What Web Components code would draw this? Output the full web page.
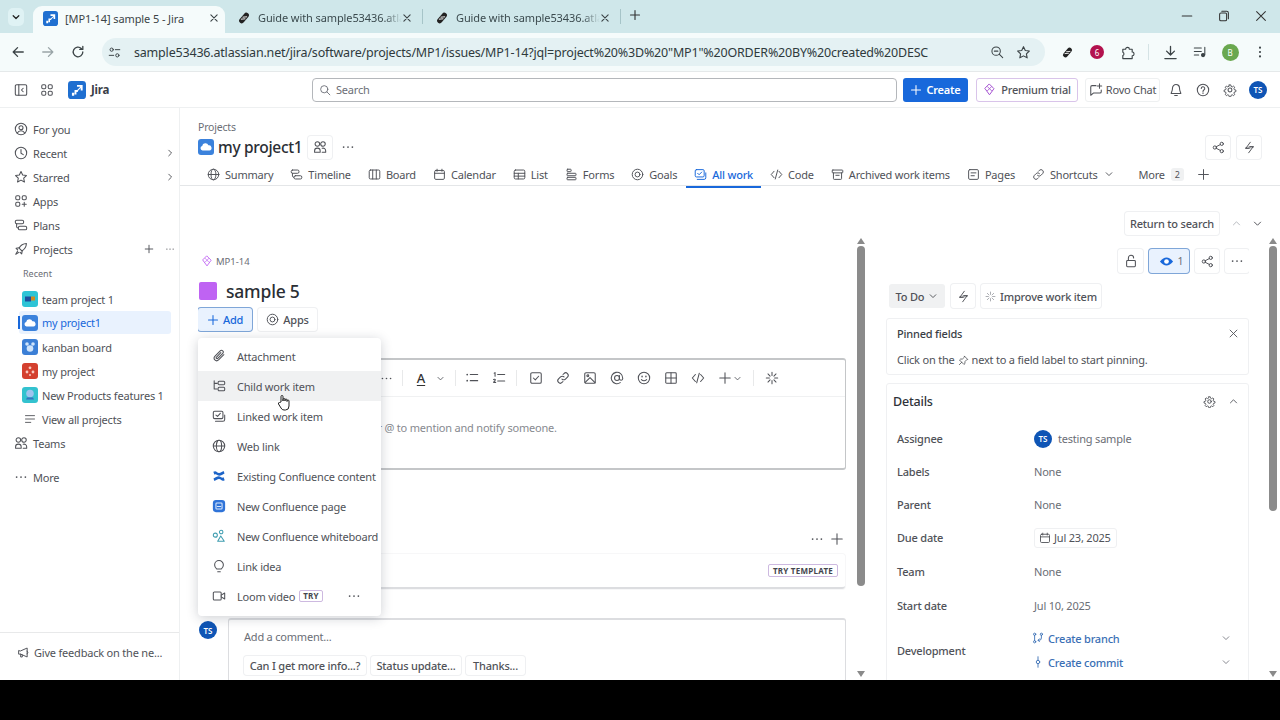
<!DOCTYPE html>
<html lang="en">
<head>
<meta charset="utf-8">
<title>[MP1-14] sample 5 - Jira</title>
<style>
  html, body { margin: 0; height: 100%; background: #000; overflow: hidden; }
  body { font-family: "Noto Sans", "Open Sans", sans-serif; font-size: 11px; color: #505258; letter-spacing: -.2px; }
</style>
</head>
<body>
<app-shell></app-shell>
<script>
const ICONS = {
  foryou: '<circle cx="8" cy="8" r="6.5"/><circle cx="8" cy="6.6" r="2.3"/><path d="M3.8 12.6c1-1.9 2.5-2.6 4.2-2.6s3.2.7 4.2 2.6"/>',
  clock: '<circle cx="8" cy="8" r="6.5"/><path d="M8 4v4.3l2.6 1.6"/>',
  star: '<path d="M8 1.8l1.9 4 4.3.6-3.1 3 .8 4.3L8 11.6l-3.9 2.1.8-4.3-3.1-3 4.3-.6z"/>',
  apps: '<rect x="2" y="2" width="4.6" height="4.6" rx="1.4"/><rect x="9.4" y="2" width="4.6" height="4.6" rx="1.4"/><rect x="2" y="9.4" width="4.6" height="4.6" rx="1.4"/><path d="M11.7 9.4v4.6M9.4 11.7H14"/>',
  grid: '<rect x="2" y="2" width="4.6" height="4.6" rx="1.4"/><rect x="9.4" y="2" width="4.6" height="4.6" rx="1.4"/><rect x="2" y="9.4" width="4.6" height="4.6" rx="1.4"/><rect x="9.4" y="9.4" width="4.6" height="4.6" rx="1.4"/>',
  plans: '<rect x="1.5" y="2.5" width="9.5" height="4" rx="1.6"/><rect x="5" y="9.5" width="9.5" height="4" rx="1.6"/><path d="M3 6.5v3.5q0 1 1.5 1.5"/>',
  rocket: '<path d="M14.2 1.8c-4 .2-6.600 2-8.400 5.200l3.200 3.200c3.200-1.800 5-4.400 5.200-8.400z"/><path d="M6 6.600l-3.600.6 1.800 1.800M9.400 10l-.6 3.600-1.800-1.800"/><path d="M4.200 10.400L2 14l3.600-2.200"/>',
  teams: '<circle cx="5" cy="4.600" r="2.600"/><circle cx="11.400" cy="4.600" r="2.600"/><path d="M1.800 14v-1.500a3 3 0 0 1 6.400 0V14zM10.500 9.500a3 3 0 0 1 4 3V14h-4"/>',
  more: '<circle cx="3" cy="8" r="1" fill="currentColor" stroke="none"/><circle cx="8" cy="8" r="1" fill="currentColor" stroke="none"/><circle cx="13" cy="8" r="1" fill="currentColor" stroke="none"/>',
  right: '<path d="M6 3.500L10.500 8 6 12.500"/>',
  down: '<path d="M3.500 6l4.500 4.500L12.500 6"/>',
  up: '<path d="M3.500 10L8 5.500l4.500 4.500"/>',
  plus: '<path d="M8 2v12M2 8h12"/>',
  viewall: '<path d="M2 3.500h12M2 8h12M2 12.500h7"/>',
  globe: '<circle cx="8" cy="8" r="6.500"/><ellipse cx="8" cy="8" rx="3" ry="6.500"/><path d="M1.500 8h13"/>',
  board: '<rect x="1.500" y="2.500" width="13" height="11" rx="1.500"/><path d="M5.800 2.500v11M10.200 2.500v11"/>',
  calendar: '<rect x="2" y="3" width="12" height="11" rx="1.500"/><path d="M2 6.500h12M5 1.500V4M11 1.500V4"/>',
  list: '<rect x="1.500" y="2.500" width="13" height="11" rx="1.500"/><path d="M1.500 6.500h13M1.500 10h13M6.500 6.500v7"/>',
  forms: '<rect x="2.500" y="1.500" width="5" height="3" rx=".8"/><rect x="2.500" y="6.500" width="11" height="3" rx=".8"/><rect x="2.500" y="11.500" width="11" height="3" rx=".8"/>',
  goals: '<circle cx="8" cy="8" r="6.500"/><circle cx="8" cy="8" r="3"/>',
  allwork: '<rect x="1.500" y="2" width="11" height="9" rx="1.500"/><path d="M4.500 6.500l1.800 1.800 3.200-3.300M4 14h8.500a2 2 0 0 0 2-2V6"/>',
  code: '<path d="M5 4L1.500 8 5 12M11 4l3.500 4-3.500 4M9.500 2.500l-3 11"/>',
  archive: '<rect x="1.500" y="2.500" width="13" height="3.500" rx=".8"/><path d="M3 6v7q0 1 1 1h8q1 0 1-1V6M6 9h4"/>',
  page: '<rect x="2" y="2" width="12" height="12" rx="1.500"/><path d="M5 6h6M5 9.500h4"/>',
  link: '<path d="M6.800 9.200a2.800 2.800 0 0 0 4 0l2.300-2.300a2.800 2.800 0 0 0-4-4L8 4"/><path d="M9.200 6.800a2.800 2.800 0 0 0-4 0L2.900 9.100a2.800 2.800 0 0 0 4 4L8 12"/>',
  bolt: '<path d="M9 1.500L3.500 9H7l0 0M7 14.500L12.500 7H9"/><path d="M3 8.800h5.500M7.500 7.200H13"/>',
  share: '<circle cx="12" cy="3.500" r="2"/><circle cx="12" cy="12.500" r="2"/><circle cx="3.500" cy="8" r="2"/><path d="M5.300 7l4.900-2.600M5.300 9l4.900 2.600"/>',
  lock: '<rect x="3" y="7.500" width="10" height="7" rx="1"/><path d="M5 7.500V4.500a3 3 0 0 1 6 0"/>',
  close: '<path d="M3 3l10 10M13 3L3 13"/>',
  gear: '<circle cx="8" cy="8" r="2.200"/><path d="M7 1.500h2l.4 1.900 1.500.7 1.700-1 1.400 1.400-1 1.700.6 1.500 1.900.4v2l-1.900.4-.6 1.500 1 1.700-1.400 1.400-1.700-1-1.500.6-.4 1.900H7l-.4-1.900-1.500-.6-1.700 1-1.400-1.400 1-1.700-.6-1.500-1.900-.4v-2l1.900-.4.6-1.500-1-1.700L3.400 3l1.700 1 1.500-.7z" transform="translate(.8 .8) scale(.9)"/>',
  bell: '<path d="M8 1.800a4 4 0 0 0-4 4c0 4-1.500 5-1.500 6.200h11c0-1.200-1.500-2.200-1.500-6.200a4 4 0 0 0-4-4zM6.500 14.300h3"/>',
  help: '<circle cx="8" cy="8" r="6.500"/><path d="M6 6.300a2 2 0 1 1 3 1.700c-.7.400-1 .8-1 1.700M8 11.200v.8"/>',
  search: '<circle cx="7" cy="7" r="4.800"/><path d="M10.500 10.500l4 4"/>',
  attach: '<path d="M13.500 6.500l-6 6a3 3 0 0 1-4.300-4.200l6.200-6.200a2 2 0 0 1 2.900 2.800l-6 6a1 1 0 0 1-1.400-1.400l5.200-5.300"/>',
  child: '<path d="M2.500 2v9.500h3.500M2.500 5h3.500"/><rect x="7" y="2.500" width="7.500" height="4" rx="1.200"/><rect x="7" y="9.500" width="7.500" height="4" rx="1.200"/>',
  linked: '<rect x="1.500" y="2.500" width="11" height="8.500" rx="1.500"/><path d="M4.500 7l1.800 1.500L9.500 5M4 14h8.500a2 2 0 0 0 2-2V7"/>',
  bulb: '<path d="M5.500 11.500C4 10.200 3 9 3 6.800a5 5 0 0 1 10 0c0 2.200-1 3.400-2.500 4.700zM6.500 14.500h3"/>',
  video: '<rect x="1.500" y="3.500" width="9" height="9" rx="1.200"/><path d="M10.500 7l4-2.500v7l-4-2.500"/>',
  bullets: '<circle cx="2.500" cy="4" r="1" fill="currentColor" stroke="none"/><circle cx="2.500" cy="11" r="1" fill="currentColor" stroke="none"/><path d="M6 4h8.500M6 11h8.500"/>',
  numbered: '<path d="M6.500 4h8M6.500 11.500h8M2.500 2.500l1-.7V6M1.800 9.800q1.700-1 2 .2c.2 1-1.500 1.800-2 3h2.400"/>',
  checkbox: '<rect x="2" y="2" width="12" height="12" rx="1.500"/><path d="M5 8l2.200 2.200L11 6"/>',
  image: '<rect x="2" y="2" width="12" height="12" rx="1.500"/><circle cx="5.500" cy="5.500" r="1.100"/><path d="M2.500 13l5.500-5.500 6 6"/>',
  at: '<circle cx="8" cy="8" r="2.800"/><path d="M10.800 5.200V9a1.900 1.900 0 0 0 3.700 0V8a6.500 6.500 0 1 0-2.800 5.300"/>',
  emoji: '<circle cx="8" cy="8" r="6.500"/><path d="M5 9.800q3 2.800 6 0"/><path d="M5.800 6v.6M10.200 6v.6" stroke-width="1.600"/>',
  table: '<rect x="2" y="2" width="12" height="12" rx="1"/><path d="M8 2v12M2 8h12"/>',
  ai: '<path d="M8 1.500v3.500M8 11v3.500M1.500 8H5M11 8h3.500M3.400 3.400l2.400 2.400M10.200 10.200l2.400 2.400M12.600 3.400l-2.400 2.400M5.800 10.200l-2.400 2.400"/>',
  branch: '<circle cx="3.500" cy="3" r="1.500"/><circle cx="3.500" cy="13" r="1.500"/><circle cx="12.500" cy="3" r="1.500"/><path d="M3.500 4.500v7M12.500 4.500V8q0 3-3 3H8l2-2M8 11l2 2"/>',
  commit: '<circle cx="8" cy="8" r="2.300"/><path d="M8 1v4.700M8 10.300V15"/>',
  pin: '<path d="M9.500 1.800l4.700 4.700-1.500.4-2.500 2.600-.2 3L8.700 13.800 2.200 7.300 3.500 6l3-.2 2.600-2.500zM5.500 10.500L2 14"/>',
  speak: '<path d="M2 6v4h2.500l8 3.500v-11l-8 3.500zM4.500 10v3.500h2V11M12.500 6.200q2 1.800 0 3.600"/>',
  rovo: '<path d="M8 3H3.500Q2 3 2 4.500V14l3-2.500h7.500q1.500 0 1.500-1.500V8"/><path d="M12 1v5M9.500 3.500h5"/>',
  diamond: '<path d="M8 1.500l5.500 5.500L8 14.500 2.500 7z"/><path d="M5.500 4.500l5 5M10.500 4.500l-5 5" stroke-width="1"/>',
  back: '<path d="M14 8H2.500M7.500 3L2.500 8l5 5"/>',
  fwd: '<path d="M2 8h11.500M8.500 3l5 5-5 5"/>',
  reload: '<path d="M13.500 8A5.500 5.500 0 1 1 11.800 4M13.500 1.500v3.500H10"/>',
  tune: '<circle cx="4.500" cy="4.500" r="2"/><circle cx="11.500" cy="11.500" r="2"/><path d="M9 4.500h5.500M1.500 11.500H7"/>',
  zoomout: '<circle cx="7" cy="7" r="4.800"/><path d="M10.500 10.500l4 4M5 7h4"/>',
  puzzle: '<path d="M3 4.500h3a2 2 0 0 1 4 0h3v3a2 2 0 0 1 0 4v3H3v-3.300a1.800 1.800 0 0 0 0-3.400z"/>',
  download: '<path d="M8 1.500v9M3.800 6.500L8 10.700l4.200-4.200M2 14.500h12"/>',
  media: '<path d="M1.500 3.500h8M1.500 7.500h8M1.500 11.500h5M13.500 2.500v8.500"/><circle cx="11.500" cy="11.500" r="1.800" fill="currentColor"/>',
  kebab: '<circle cx="8" cy="3" r="1.200" fill="currentColor" stroke="none"/><circle cx="8" cy="8" r="1.200" fill="currentColor" stroke="none"/><circle cx="8" cy="13" r="1.200" fill="currentColor" stroke="none"/>',
  winmin: '<path d="M2.500 8h11"/>',
  winmax: '<rect x="3" y="4.500" width="8" height="9" rx="1.500"/><path d="M5.500 2.500H11q2 0 2 2v6.500"/>',
  rail: '<rect x="1.500" y="2" width="13" height="12" rx="1.500"/><path d="M5.500 2v12M10.500 6L8.500 8l2 2"/>',
  whiteboard: '<circle cx="3.800" cy="7" r="2.300"/><circle cx="10.500" cy="3.500" r="2"/><path d="M10 8l4 6H6.500z"/>'
};

const LOGOS = {
  jira: '<rect width="16" height="16" rx="3" fill="#1f6fd0"/><path d="M8 8.200l3-3h-3V3.500h5V8.500h-1.700V6.300L8.600 9zM5.800 8h3v1.700H7.500V12H5.800zM3.500 10.500h2V13h-2z" fill="#fff"/>',
  guide: '<g transform="rotate(-50 8 8)"><rect x="1" y="5" width="14" height="6" rx="3" fill="#222"/><path d="M5 6.500l3 3M8 6.500l3 3" stroke="#fff" stroke-width="1"/></g>',
  team: '<rect width="16" height="16" rx="3" fill="#2ec4d6"/><rect x="3" y="5.500" width="6" height="5" fill="#1d4e9e"/><rect x="9" y="5.500" width="4" height="4" fill="#d08a1e"/>',
  cloud: '<rect width="16" height="16" rx="3" fill="#3b82dc"/><path d="M4.500 11.500a2.300 2.300 0 0 1-.3-4.500 3.200 3.200 0 0 1 6.200-.7 2.600 2.600 0 0 1 1 5.200z" fill="#fff"/>',
  kanban: '<rect width="16" height="16" rx="3" fill="#3b7fd6"/><circle cx="5" cy="5" r="1.800" fill="#cfe4fb"/><circle cx="11" cy="5" r="1.800" fill="#cfe4fb"/><circle cx="8" cy="9.500" r="3.300" fill="#cfe4fb"/>',
  red: '<rect width="16" height="16" rx="3" fill="#d4402f"/><circle cx="8" cy="4.800" r="1.400" fill="#f9c9c0"/><circle cx="5" cy="9" r="1.400" fill="#f9c9c0"/><circle cx="11" cy="9" r="1.400" fill="#f9c9c0"/><circle cx="8" cy="12" r="1" fill="#f9c9c0"/>',
  teal: '<rect width="16" height="16" rx="3" fill="#33c2cf"/><circle cx="8" cy="6.500" r="3.800" fill="#9fc3ee"/><path d="M4 12.500h8l-1-2H5z" fill="#3a6fc0"/>',
  confluence: '<path d="M1.500 3.200c1.500-1 3-.9 4 .2 1.200 1.300 3.300 1.400 5 .3l2.800-1.400 1 2.800-3 1.700c-2 1.100-3.800 1-5.300.1C4.800 6.200 4 5.700 2.800 6.500zM14.500 12.800c-1.500 1-3 .9-4-.2-1.200-1.300-3.300-1.400-5-.3l-2.800 1.400-1-2.800 3-1.700c2-1.100 3.800-1 5.300-.1 1.200.7 2 1.200 3.200.4z" fill="#1d64c8"/>',
  confpage: '<rect x="1" y="1" width="14" height="14" rx="3.500" fill="#2f73d8"/><rect x="4.500" y="4.500" width="7" height="7" rx="1" fill="none" stroke="#dbe9fc" stroke-width="1.200"/><path d="M6 8.500h4" stroke="#dbe9fc"/>'
};

class XIcon extends HTMLElement {
  static get observedAttributes() { return ['name', 'size', 'logo']; }
  constructor() {
    super();
    this.attachShadow({ mode: 'open' });
  }
  connectedCallback() { this.render(); }
  attributeChangedCallback() { this.render(); }
  render() {
    const size = this.getAttribute('size') || 14;
    const logo = this.getAttribute('logo');
    const body = logo ? LOGOS[logo] : ICONS[this.getAttribute('name')] || '';
    this.shadowRoot.innerHTML = `
      <style>
        :host { display: inline-flex; flex: none; width: ${size}px; height: ${size}px; }
        svg { width: 100%; height: 100%; display: block; fill: none; stroke: currentColor; stroke-width: ${this.getAttribute('sw') || 1.2}; stroke-linecap: round; stroke-linejoin: round; }
      </style>
      <svg viewBox="0 0 16 16" style="${logo ? 'stroke:none' : ''}">${body}</svg>`;
  }
}
customElements.define('x-icon', XIcon);

class JiraAvatar extends HTMLElement {
  constructor() {
    super();
    this.attachShadow({ mode: 'open' });
    this.shadowRoot.innerHTML = `
      <style>
        :host { display: inline-flex; flex: none; width: 18px; height: 18px; border-radius: 50%; background: #0f55b5; color: #fff;
          align-items: center; justify-content: center; font-size: 8px; font-weight: 600; letter-spacing: 0; }
      </style>TS`;
  }
}
customElements.define('jira-avatar', JiraAvatar);

class UiButton extends HTMLElement {
  constructor() {
    super();
    this.attachShadow({ mode: 'open' });
    this.shadowRoot.innerHTML = `
      <style>
        :host { display: inline-flex; flex: none; box-sizing: border-box; align-items: center; justify-content: center; gap: 4px;
          height: 24px; min-width: 24px; border-radius: 3px; background: #fff; box-shadow: 0 0 0 1px #eff0f2; color: #505258; }
        :host([selected]) { background: #e9f2fe; box-shadow: 0 0 0 1px #7fa6d8; }
        :host([neutral]) { background: #f0f1f2; box-shadow: none; }
      </style><slot></slot>`;
  }
}
customElements.define('ui-button', UiButton);

class ScrollBar extends HTMLElement {
  constructor() {
    super();
    this.attachShadow({ mode: 'open' });
    const thumb = this.getAttribute('thumb');
    const offset = this.getAttribute('offset');
    this.shadowRoot.innerHTML = `
      <style>
        :host { display: flex; flex: none; flex-direction: column; align-items: center; width: 10px; height: 100%; box-sizing: border-box; padding-top: 3px; padding-bottom: 3px; }
        .a { width: 0; height: 0; border-left: 4px solid transparent; border-right: 4px solid transparent; flex: none; }
        .up { border-bottom: 6px solid #8a8a8a; }
        .dn { border-top: 6px solid #8a8a8a; margin-top: auto; }
        .t { width: 8px; height: ${thumb}px; margin-top: ${offset}px; background: #8b8b8b; border-radius: 4px; }
      </style>
      <div class="a up"></div><div class="t"></div><div class="a dn"></div>`;
  }
}
customElements.define('scroll-bar', ScrollBar);

class BrowserChrome extends HTMLElement {
  constructor() {
    super();
    this.attachShadow({ mode: 'open' });
  }
  connectedCallback() {
    this.shadowRoot.innerHTML = `
      <style>
        :host { display: block; font-family: "Noto Sans", sans-serif; font-size: 11px; color: #3c4447; letter-spacing: -.1px; }
        .strip { display: flex; align-items: flex-end; height: 33px; background: #cfe7ea; position: relative; }
        .list-btn { width: 16px; height: 18px; margin: 0 9px 7px 8px; border-radius: 5px; background: #dff2f4; display: flex; align-items: center; justify-content: center; color: #222; flex: none; }
        .tab { display: flex; align-items: center; height: 27px; box-sizing: border-box; flex: none; }
        .active { width: 192px; background: #f5fbfb; border-radius: 9px 9px 0 0; padding: 0 6px 3px 19px; margin-right: 0; margin-left: 0; }
        .idle { width: 198px; padding: 0 10px 4px 12px; }
        .active { padding-left: 10px; }
        .label { flex: 1; overflow: hidden; white-space: nowrap; margin-left: 7px; }
        .idle .label { -webkit-mask-image: linear-gradient(90deg, #000 88%, transparent); mask-image: linear-gradient(90deg, #000 88%, transparent); margin-left: 7px; color: #3b4a4e; }
        .sep { width: 1px; height: 15px; background: #a6c4c8; margin-bottom: 9px; flex: none; }
        .new { margin: 0 0 9px 8px; color: #333; }
        .win { margin-left: auto; display: flex; gap: 23px; margin-bottom: 10px; padding-right: 12px; color: #333; }
        .tools { display: flex; align-items: center; height: 39px; background: #f5fbfb; border-bottom: 1px solid #e5e9ea; box-sizing: border-box; padding-left: 11px; }
        .tools > x-icon { color: #3c4447; }
        .omni { display: flex; align-items: center; box-sizing: border-box; width: 943px; height: 28px; margin-left: 9px; border-radius: 14px; background: #e4f1f3; padding: 0 14px 0 6px; flex: none; }
        .url { flex: 1; margin-left: 10px; font-size: 12.5px; letter-spacing: -.19px; white-space: nowrap; color: #2f3a3d; }
        .site { width: 16px; display: flex; }
        .right { display: flex; align-items: center; }
        .dot { width: 14px; height: 14px; border-radius: 50%; background: #b3124e; color: #fff; display: flex; align-items: center; justify-content: center; font-size: 8px; }
        .profile { width: 17px; height: 17px; border-radius: 50%; background: #6aa84f; color: #fff; display: flex; align-items: center; justify-content: center; font-size: 8px; }
        .cell { width: 30px; display: flex; justify-content: center; flex: none; }
        .vr { width: 1px; height: 16px; background: #d5e3e5; margin: 0 7px; }
      </style>
      <div class="strip">
        <div class="list-btn"><x-icon name="down" size="10" sw="2"></x-icon></div>
        <div class="tab active"><x-icon logo="jira" size="15"></x-icon><span class="label">[MP1-14] sample 5 - Jira</span><x-icon name="close" size="10" sw="1.800"></x-icon></div>
        <div class="tab idle" style="width:197px"><x-icon logo="guide" size="14"></x-icon><span class="label">Guide with sample53436.atlassian.net</span><x-icon name="close" size="10" sw="1.800"></x-icon></div>
        <div class="sep"></div>
        <div class="tab idle" style="width:197px"><x-icon logo="guide" size="14"></x-icon><span class="label">Guide with sample53436.atlassian.net</span><x-icon name="close" size="10" sw="1.800"></x-icon></div>
        <div class="sep"></div>
        <div class="new"><x-icon name="plus" size="12" sw="1.500"></x-icon></div>
        <div class="win"><x-icon name="winmin" size="14"></x-icon><x-icon name="winmax" size="14"></x-icon><x-icon name="close" size="14"></x-icon></div>
      </div>
      <div class="tools">
        <x-icon name="back" size="14" sw="1.500"></x-icon>
        <x-icon name="fwd" size="14" sw="1.500" style="margin-left:16px;color:#9aa5a8"></x-icon>
        <x-icon name="reload" size="14" sw="1.500" style="margin-left:16px"></x-icon>
        <div class="omni" style="margin-left:17px">
          <span class="site"><x-icon name="tune" size="13"></x-icon></span>
          <span class="url">sample53436.atlassian.net/jira/software/projects/MP1/issues/MP1-14?jql=project%20%3D%20"MP1"%20ORDER%20BY%20created%20DESC</span>
          <x-icon name="zoomout" size="14"></x-icon>
          <x-icon name="star" size="15" style="margin-left:12px"></x-icon>
        </div>
        <div class="right" style="margin-left:7px">
          <span class="cell"><x-icon logo="guide" size="13"></x-icon></span>
          <span class="cell"><span class="dot">6</span></span>
          <span class="cell"><x-icon name="puzzle" size="15"></x-icon></span>
          <span class="vr" style="margin:0 6px 0 6px"></span>
          <span class="cell" style="margin-left:0"><x-icon name="download" size="15" sw="1.400"></x-icon></span>
          <span class="cell"><x-icon name="media" size="14"></x-icon></span>
          <span class="cell"><span class="profile">B</span></span>
          <span class="cell"><x-icon name="kebab" size="14"></x-icon></span>
        </div>
      </div>`;
  }
}
customElements.define('browser-chrome', BrowserChrome);

class JiraTopbar extends HTMLElement {
  constructor() {
    super();
    this.attachShadow({ mode: 'open' });
  }
  connectedCallback() {
    this.shadowRoot.innerHTML = `
      <style>
        :host { display: flex; align-items: center; box-sizing: border-box; height: 36px; background: #fff; border-bottom: 1px solid #eef0f1; }
        .left { display: flex; align-items: center; width: 312px; flex: none; box-sizing: border-box; padding-left: 14px; }
        .brand { font-weight: 700; font-size: 11.5px; color: #3a4048; margin-left: 5px; }
        .search { display: flex; align-items: center; gap: 5px; width: 585px; height: 24px; box-sizing: border-box; padding-left: 6px; border: 1px solid #b4b7bb; border-radius: 4px; color: #6b6e76; flex: none; }
        .create { display: flex; align-items: center; justify-content: center; gap: 4px; width: 65px; height: 24px; margin-left: 6px; border-radius: 3px; background: #1868db; color: #fff; font-weight: 600; flex: none; }
        .premium { display: flex; align-items: center; justify-content: center; gap: 5px; width: 102px; height: 24px; box-sizing: border-box; margin-left: 8px; border: 1px solid #d9c4ea; border-radius: 3px; font-weight: 500; color: #505258; flex: none; }
        .rovo { display: flex; align-items: center; justify-content: center; gap: 3px; width: 75px; height: 24px; box-sizing: border-box; margin-left: 7px; border: 1px solid #eef0f1; border-radius: 3px; flex: none; }
        .ico { width: 27px; display: flex; justify-content: center; flex: none; }
      </style>
      <div class="left">
        <x-icon name="rail" size="14"></x-icon>
        <x-icon name="grid" size="14" style="margin-left:12px"></x-icon>
        <x-icon logo="jira" size="18" style="margin-left:14px"></x-icon>
        <span class="brand">Jira</span>
      </div>
      <div class="search"><x-icon name="search" size="12"></x-icon><span>Search</span></div>
      <div class="create"><x-icon name="plus" size="12" sw="1.400"></x-icon>Create</div>
      <div class="premium"><x-icon name="diamond" size="13" style="color:#a24fd0"></x-icon>Premium trial</div>
      <div class="rovo"><x-icon name="rovo" size="14"></x-icon>Rovo Chat</div>
      <div class="ico" style="margin-left:2px"><x-icon name="bell" size="14"></x-icon></div>
      <div class="ico"><x-icon name="help" size="14"></x-icon></div>
      <div class="ico"><x-icon name="gear" size="14"></x-icon></div>
      <jira-avatar style="margin-left:6px"></jira-avatar>`;
  }
}
customElements.define('jira-topbar', JiraTopbar);

class NavItem extends HTMLElement {
  constructor() {
    super();
    this.attachShadow({ mode: 'open' });
    this.shadowRoot.innerHTML = `
      <style>
        :host { display: flex; align-items: center; height: 24px; padding-left: 14px; white-space: nowrap; position: relative; }
        :host([sub]) { padding-left: 22px; }
        :host([current]) { color: #1868db; background: #e9f2fe; margin-left: 19px; padding-left: 3px; border-radius: 3px; height: 23px; margin-bottom: 1px; }
        :host([current])::before { content: ""; position: absolute; left: -1px; top: 5px; bottom: 5px; width: 2px; background: #1868db; }
        .lab { margin-left: 5px; }
        :host([sub]) .lab { margin-left: 4px; }
        .end { margin-left: auto; display: flex; align-items: center; }
      </style>
      <slot name="icon"></slot><span class="lab"><slot></slot></span><span class="end"><slot name="end"></slot></span>`;
  }
}
customElements.define('nav-item', NavItem);

class JiraSidebar extends HTMLElement {
  constructor() {
    super();
    this.attachShadow({ mode: 'open' });
  }
  connectedCallback() {
    const top = [['foryou', 'For you'], ['clock', 'Recent', 1], ['star', 'Starred', 1], ['apps', 'Apps'], ['plans', 'Plans']];
    const projects = [['team', 'team project 1'], ['cloud', 'my project1', 0, 1], ['kanban', 'kanban board'], ['red', 'my project'], ['teal', 'New Products features 1']];
    this.shadowRoot.innerHTML = `
      <style>
        :host { display: flex; flex-direction: column; flex: none; width: 180px; box-sizing: border-box; border-right: 1px solid #eef0f1; background: #fff; padding-top: 9px; }
        nav { width: 171px; flex: 1; }
        .small { font-size: 9px; height: 26px; line-height: 26px; padding-left: 23px; color: #6b6e76; box-sizing: border-box; letter-spacing: 0; }
        .foot { display: flex; align-items: center; gap: 4px; height: 48px; padding-left: 17px; padding-bottom: 8px; box-sizing: border-box; border-top: 1px solid #e8e9ea; margin-top: auto; }
      </style>
      <nav>
        ${top.map(t => `<nav-item><x-icon slot="icon" name="${t[0]}" size="14"></x-icon>${t[1]}${t[2] ? '<x-icon slot="end" name="right" size="10" sw="1.500" style="margin-right:-4px"></x-icon>' : ''}</nav-item>`).join('')}
        <nav-item><x-icon slot="icon" name="rocket" size="14"></x-icon>Projects<span slot="end" style="display:flex;gap:11px;margin-right:-4px"><x-icon name="plus" size="10" sw="1.500"></x-icon><x-icon name="more" size="10" sw="1.500"></x-icon></span></nav-item>
        <div class="small">Recent</div>
        ${projects.map(p => `<nav-item sub ${p[3] ? 'current' : ''}><x-icon slot="icon" logo="${p[0]}" size="16"></x-icon>${p[1]}</nav-item>`).join('')}
        <nav-item sub><x-icon slot="icon" name="viewall" size="12" style="margin:0 2px"></x-icon>View all projects</nav-item>
        <nav-item><x-icon slot="icon" name="teams" size="14"></x-icon>Teams</nav-item>
        <nav-item style="margin-top:10px"><x-icon slot="icon" name="more" size="14" sw="1.500"></x-icon>More</nav-item>
      </nav>
      <div class="foot"><x-icon name="speak" size="13"></x-icon>Give feedback on the ne...</div>`;
  }
}
customElements.define('jira-sidebar', JiraSidebar);

class ProjectHead extends HTMLElement {
  constructor() {
    super();
    this.attachShadow({ mode: 'open' });
  }
  connectedCallback() {
    const tabs = [['globe', 'Summary'], ['plans', 'Timeline'], ['board', 'Board'], ['calendar', 'Calendar'], ['list', 'List'], ['forms', 'Forms'], ['goals', 'Goals'], ['allwork', 'All work', 1], ['code', 'Code'], ['archive', 'Archived work items'], ['page', 'Pages'], ['link', 'Shortcuts']];
    this.shadowRoot.innerHTML = `
      <style>
        :host { display: block; flex: none; height: 78px; box-sizing: border-box; border-bottom: 1px solid #e4e6e8; padding: 12px 19px 0 18px; position: relative; }
        .crumb { font-size: 10.5px; line-height: 14px; color: #6b6e76; }
        .title { display: flex; align-items: center; height: 24px; margin-top: 1px; }
        h1 { font-size: 15.500px; font-weight: 500; margin: 0 0 0 4px; color: #2a2e34; letter-spacing: -.3px; }
        .rt { margin-left: auto; display: flex; gap: 7px; }
        .tabs { display: flex; height: 26px; margin-top: 2px; padding-left: 1px; }
        .t { display: flex; align-items: center; gap: 5px; height: 100%; box-sizing: border-box; padding: 0 8px; margin-right: 1px; white-space: nowrap; position: relative; flex: none; }
        .t.on { color: #1868db; font-weight: 500; }
        .t.on::after { content: ""; position: absolute; left: 0; right: 0; bottom: -1px; height: 2px; background: #1868db; }
        .badge { font-size: 9px; padding: 0 4px; background: #f0f1f2; border-radius: 3px; margin-left: 1px; letter-spacing: 0; }
      </style>
      <div class="crumb">Projects</div>
      <div class="title">
        <x-icon logo="cloud" size="16"></x-icon><h1>my project1</h1>
        <ui-button style="margin-left:6px;width:23px;height:23px"><x-icon name="teams" size="14"></x-icon></ui-button>
        <x-icon name="more" size="14" sw="1.500" style="margin-left:9px"></x-icon>
        <span class="rt">
          <ui-button style="width:23px;height:23px"><x-icon name="share" size="13"></x-icon></ui-button>
          <ui-button style="width:23px;height:23px"><x-icon name="bolt" size="13"></x-icon></ui-button>
        </span>
      </div>
      <div class="tabs">
        ${tabs.map(t => `<div class="t ${t[2] ? 'on' : ''}"><x-icon name="${t[0]}" size="13"></x-icon>${t[1]}${t[1] === 'Shortcuts' ? '<x-icon name="down" size="10" sw="1.500" style="margin-left:1px"></x-icon>' : ''}</div>`).join('')}
        <div class="t" style="padding-left:16px;padding-right:0">More<span class="badge">2</span></div>
        <div class="t" style="padding-left:12px"><x-icon name="plus" size="13"></x-icon></div>
      </div>`;
  }
}
customElements.define('project-head', ProjectHead);

class AddMenu extends HTMLElement {
  constructor() {
    super();
    this.attachShadow({ mode: 'open' });
  }
  connectedCallback() {
    const rows = [
      ['name="attach"', 'Attachment'], ['name="child"', 'Child work item', 1], ['name="linked"', 'Linked work item'], ['name="globe"', 'Web link'],
      ['logo="confluence"', 'Existing Confluence content'], ['logo="confpage"', 'New Confluence page'], ['name="whiteboard" style="color:#3f9db0"', 'New Confluence whiteboard'], ['name="bulb"', 'Link idea']
    ];
    this.shadowRoot.innerHTML = `
      <style>
        :host { display: block; position: absolute; left: 18px; top: 103px; width: 183px; height: 278px; box-sizing: border-box; padding-top: 3px; background: #fff; border-radius: 4px; box-shadow: 0 2px 12px rgba(30,40,60,.22); z-index: 5; }
        .r { display: flex; align-items: center; height: 30px; padding-left: 14px; gap: 11px; white-space: nowrap; }
        .r.h { background: #f0f1f2; }
        .try { font-size: 8px; font-weight: 700; border: 1px solid #cdb9e0; border-radius: 2px; padding: 0 3px; line-height: 10px; margin-left: -7px; letter-spacing: .2px; color: #44464d; }
        .m { margin-left: auto; margin-right: 20px; }
        .cursor { position: absolute; left: 79px; top: 56px; }
      </style>
      ${rows.map(r => `<div class="r ${r[2] ? 'h' : ''}"><x-icon ${r[0]} size="14"></x-icon>${r[1]}</div>`).join('')}
      <div class="r"><x-icon name="video" size="14"></x-icon>Loom video<span class="try">TRY</span><x-icon class="m" name="more" size="14" sw="1.500"></x-icon></div>
      <svg class="cursor" width="14" height="17" viewBox="0 0 14 17"><path d="M4 8V2.500a1 1 0 0 1 2 0V7l0-1.500a1 1 0 0 1 2 0V7l0-1a1 1 0 0 1 2 0v1.500l0-.5a1 1 0 0 1 2 0V12q0 4-3.500 4H7q-2 0-3-2L1.500 10q-.5-1.500 1-1.500z" fill="#fff" stroke="#222" stroke-width="1"/></svg>`;
  }
}
customElements.define('add-menu', AddMenu);

class WorkItem extends HTMLElement {
  constructor() {
    super();
    this.attachShadow({ mode: 'open' });
  }
  connectedCallback() {
    const cell = (name, w) => `<span class="c" style="width:${w || 27}px"><x-icon name="${name}" size="14"></x-icon></span>`;
    this.shadowRoot.innerHTML = `
      <style>
        :host { display: block; flex: none; width: 648px; height: 100%; overflow: hidden; box-sizing: border-box; padding-top: 18px; }
        .key { display: flex; align-items: center; gap: 3px; height: 16px; font-size: 9.500px; color: #6b6e76; letter-spacing: 0; padding-left: 3px; }
        .ttl { display: flex; align-items: center; height: 20px; margin-top: 12px; padding-left: 1px; }
        .sq { width: 18px; height: 18px; background: #bf63f3; border-radius: 2px; flex: none; }
        .ttl h2 { font-size: 17.500px; font-weight: 500; margin: 0 0 0 9px; color: #2a2e34; letter-spacing: -.2px; }
        .acts { display: flex; gap: 6px; margin-top: 7px; margin-left: 0; height: 23px; }
        .add { color: #1868db; font-weight: 500; width: 54px; height: 23px; }
        .apps { width: 59px; height: 23px; font-weight: 500; }
        .editor { box-sizing: border-box; height: 112px; margin-top: 27px; border: 1px solid #c4c6c8; border-top-width: 2px; border-bottom-width: 2px; border-radius: 3px; }
        .bar { display: flex; align-items: center; height: 36px; border-bottom: 1px solid #f0f1f2; padding-left: 174px; }
        .c { display: inline-flex; justify-content: center; flex: none; }
        .v { width: 1px; height: 16px; background: #e8e9ea; flex: none; margin: 0 3px; }
        .ph { padding: 23px 0 0 172px; color: #878a90; }
        .ctl { display: flex; justify-content: flex-end; align-items: center; gap: 6px; height: 20px; margin-top: 59px; padding-right: 2px; }
        .tpl { display: flex; justify-content: flex-end; align-items: center; box-sizing: border-box; height: 35px; margin-top: 5px; margin-right: 1px; padding-right: 7px; border-bottom: 2px solid #dcdde0; border-radius: 3px; box-shadow: 0 0 0 1px #f7f7f8; }
        .tag { font-size: 8px; font-weight: 700; color: #44464d; border: 1px solid #cdb9e0; border-radius: 2px; padding: 0 4px; line-height: 11px; letter-spacing: .25px; }
        .cm { display: flex; margin-top: 29px; align-items: flex-start; }
        .cm jira-avatar { margin: 3px 11px 0 1px; }
        .box { flex: 1; height: 90px; box-sizing: border-box; border: 1px solid #dcdde0; border-top-width: 2px; border-radius: 3px; padding: 9px 0 0 15px; }
        .hold { color: #6b6e76; line-height: 16px; }
        .pills { display: flex; gap: 5px; margin-top: 11px; }
        .pills ui-button { height: 19px; font-weight: 500; }
      </style>
      <div class="key"><x-icon name="diamond" size="12" style="color:#bf63f3"></x-icon>MP1-14</div>
      <div class="ttl"><div class="sq"></div><h2>sample 5</h2></div>
      <div class="acts">
        <ui-button selected class="add"><x-icon name="plus" size="12" sw="1.400"></x-icon>Add</ui-button>
        <ui-button class="apps"><x-icon name="goals" size="13"></x-icon>Apps</ui-button>
      </div>
      <div class="editor">
        <div class="bar">
          <span class="c" style="width:26px"><x-icon name="more" size="13"></x-icon></span>
          <span class="v"></span>
          <span class="c" style="width:30px;font-size:13px;font-weight:500;text-decoration:underline;text-underline-offset:2px;color:#333">A</span><x-icon name="down" size="9" sw="1.500"></x-icon>
          <span class="v" style="margin:0 3px 0 10px"></span>
          ${cell('bullets', 26)}${cell('numbered', 28)}
          <span class="v" style="margin:0 5px 0 3px"></span>
          ${cell('checkbox')}${cell('link')}${cell('image')}${cell('at')}${cell('emoji')}${cell('table')}${cell('code')}
          <span class="c" style="width:27px"><x-icon name="plus" size="14"></x-icon></span><x-icon name="down" size="9" sw="1.500" style="margin-left:-5px"></x-icon>
          <span class="v" style="margin:0 10px 0 11px"></span>
          ${cell('ai', 16)}
        </div>
        <div class="ph">or @ to mention and notify someone.</div>
      </div>
      <div class="ctl"><x-icon name="more" size="14" sw="1.500"></x-icon><x-icon name="plus" size="14"></x-icon></div>
      <div class="tpl"><span class="tag">TRY TEMPLATE</span></div>
      <div class="cm">
        <jira-avatar></jira-avatar>
        <div class="box">
          <div class="hold">Add a comment...</div>
          <div class="pills">
            <ui-button style="width:122px">Can I get more info...?</ui-button>
            <ui-button style="width:90px">Status update...</ui-button>
            <ui-button style="width:59px">Thanks...</ui-button>
          </div>
        </div>
      </div>
      <add-menu></add-menu>`;
  }
}
customElements.define('work-item', WorkItem);

class DetailRow extends HTMLElement {
  constructor() {
    super();
    this.attachShadow({ mode: 'open' });
    this.shadowRoot.innerHTML = `
      <style>
        :host { display: grid; grid-template-columns: 137px 1fr; align-items: center; height: 33px; padding-left: 10px; white-space: nowrap; }
        .l { font-weight: 500; }
        .n { color: #6b6e76; }
      </style>
      <div class="l"><slot name="label"></slot></div><div class="n"><slot></slot></div>`;
  }
}
customElements.define('detail-row', DetailRow);

class ItemDetails extends HTMLElement {
  constructor() {
    super();
    this.attachShadow({ mode: 'open' });
  }
  connectedCallback() {
    this.shadowRoot.innerHTML = `
      <style>
        :host { display: block; flex: none; width: 363px; height: 100%; overflow: hidden; box-sizing: border-box; padding-top: 14px; }
        .top { display: flex; justify-content: flex-end; gap: 6px; height: 24px; }
        .st { display: flex; gap: 6px; margin-top: 11px; padding-left: 3px; height: 24px; }
        .card { box-sizing: border-box; border: 1px solid #eff0f2; border-radius: 3px; }
        .pin { height: 57px; margin-top: 10px; padding: 7px 0 0 10px; position: relative; }
        .pin b { display: block; font-weight: 500; color: #3a3e45; line-height: 16px; }
        .pin p { margin: 10px 0 0; display: flex; align-items: center; gap: 3px; line-height: 16px; }
        .x { position: absolute; right: 9px; top: 9px; }
        .det { margin-top: 8px; height: 330px; }
        .hd { display: flex; align-items: center; height: 34px; padding: 0 9px 0 6px; margin-bottom: 4px; }
        .hd span { font-size: 12.500px; font-weight: 500; color: #2f3339; flex: 1; }
        .who { display: flex; align-items: center; gap: 6px; }
        .date { display: inline-flex; align-items: center; gap: 3px; height: 18px; padding: 0 5px 0 4px; border: 1px solid #eff0f2; border-radius: 3px; color: #505258; }
        .dev { display: flex; align-items: center; height: 24px; color: #3a6fb5; font-weight: 500; gap: 4px; width: 199px; margin-left: -2px; padding-left: 0; }
        .dev x-icon:last-child { margin-left: auto; color: #6b6e76; }
      </style>
      <div class="top">
        <ui-button style="width:25px"><x-icon name="lock" size="14"></x-icon></ui-button>
        <ui-button selected style="width:40px"><x-icon name="foryou" size="0"></x-icon><svg width="15" height="15" viewBox="0 0 16 16"><path d="M1 8q7-8.500 14 0-7 8.500-14 0z" fill="#1868db"/><circle cx="8" cy="8" r="2.500" fill="#fff"/></svg><span style="font-size:10.500px;color:#6b6e76">1</span></ui-button>
        <ui-button style="width:24px"><x-icon name="share" size="13"></x-icon></ui-button>
        <ui-button style="width:24px"><x-icon name="more" size="14" sw="1.500"></x-icon></ui-button>
      </div>
      <div class="st">
        <ui-button neutral style="width:56px;font-weight:500">To Do<x-icon name="down" size="10" sw="1.500"></x-icon></ui-button>
        <ui-button><x-icon name="bolt" size="13"></x-icon></ui-button>
        <ui-button style="width:120px;font-weight:500"><x-icon name="ai" size="11" style="color:#9a9da3"></x-icon>Improve work item</ui-button>
      </div>
      <div class="card pin">
        <b>Pinned fields</b>
        <p>Click on the <x-icon name="pin" size="11"></x-icon> next to a field label to start pinning.</p>
        <x-icon class="x" name="close" size="11" sw="1.300"></x-icon>
      </div>
      <div class="card det">
        <div class="hd"><span>Details</span><x-icon name="gear" size="13"></x-icon><x-icon name="up" size="11" sw="1.300" style="margin-left:12px"></x-icon></div>
        <detail-row><span slot="label">Assignee</span><span class="who"><jira-avatar></jira-avatar>testing sample</span></detail-row>
        <detail-row><span slot="label">Labels</span>None</detail-row>
        <detail-row><span slot="label">Parent</span>None</detail-row>
        <detail-row><span slot="label">Due date</span><span class="date"><x-icon name="calendar" size="12"></x-icon>Jul 23, 2025</span></detail-row>
        <detail-row style="height:34px"><span slot="label">Team</span>None</detail-row>
        <detail-row style="height:34px"><span slot="label">Start date</span>Jul 10, 2025</detail-row>
        <detail-row style="height:48px;margin-top:4px"><span slot="label">Development</span>
          <div class="dev"><x-icon name="branch" size="12"></x-icon>Create branch<x-icon name="down" size="10" sw="1.300"></x-icon></div>
          <div class="dev"><x-icon name="commit" size="12"></x-icon>Create commit<x-icon name="down" size="10" sw="1.300"></x-icon></div>
        </detail-row>
      </div>`;
  }
}
customElements.define('item-details', ItemDetails);

class AppShell extends HTMLElement {
  constructor() {
    super();
    this.attachShadow({ mode: 'open' });
  }
  connectedCallback() {
    this.shadowRoot.innerHTML = `
      <style>
        :host { display: flex; flex-direction: column; width: 1280px; height: 720px; background: #000; }
        .page { display: flex; height: 572px; background: #fff; overflow: hidden; flex: none; }
        main { flex: 1; display: flex; flex-direction: column; min-width: 0; }
        .ret { display: flex; align-items: center; justify-content: flex-end; height: 24px; margin-top: 25px; flex: none; padding-right: 17px; gap: 6px; }
        .ret ui-button { width: 94px; height: 23px; font-weight: 500; margin-right: 6px; }
        .cols { display: flex; flex: 1; min-height: 0; padding-left: 18px; position: relative; }
      </style>
      <browser-chrome></browser-chrome>
      <jira-topbar></jira-topbar>
      <div class="page">
        <jira-sidebar></jira-sidebar>
        <main>
          <project-head></project-head>
          <div class="ret">
            <ui-button>Return to search</ui-button>
            <x-icon name="up" size="11" sw="1.400" style="color:#b5b8bd"></x-icon>
            <x-icon name="down" size="11" sw="1.400" style="margin-left:4px"></x-icon>
          </div>
          <div class="cols">
            <work-item></work-item>
            <scroll-bar thumb="340" offset="2" style="margin-left:10px"></scroll-bar>
            <item-details style="margin-left:20px"></item-details>
            <scroll-bar thumb="265" offset="2" style="margin-left:19px"></scroll-bar>
          </div>
        </main>
      </div>`;
  }
}
customElements.define('app-shell', AppShell);
</script>
</body>
</html>
